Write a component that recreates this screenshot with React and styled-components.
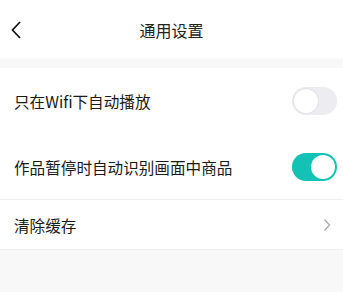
import React, { useState } from 'react';
import styled, { createGlobalStyle } from 'styled-components';

const GlobalStyle = createGlobalStyle`
  html, body {
    margin: 0;
    padding: 0;
    background: #f8f8f8;
    font-family: "Noto Sans CJK SC", "Noto Sans", sans-serif;
  }
`;

const Page = styled.div`
  width: 343px;
  min-height: 292px;
  background: #f8f8f8;
`;

const Header = styled.div`
  height: 58px;
  background: #fff;
  display: flex;
  align-items: center;
  justify-content: center;
  position: relative;
`;

const Back = styled.div`
  position: absolute;
  left: 10px;
  top: 20px;
  width: 14px;
  height: 20px;
  display: flex;
  align-items: center;
`;

const Title = styled.div`
  font-size: 16px;
  color: #222;
  margin-top: 2px;
`;

const Section = styled.div`
  margin-top: 10px;
  background: #fff;
`;

const Row = styled.div`
  height: ${(p) => p.h}px;
  display: flex;
  align-items: center;
  justify-content: space-between;
  padding: 0 6px 0 14px;
  border-bottom: ${(p) => (p.divider ? '1px solid #f0f0f0' : 'none')};
  box-sizing: border-box;
`;

const Label = styled.div`
  font-size: 15.6px;
  color: #1a1a1a;
`;

const Toggle = styled.div`
  width: 45px;
  height: 28px;
  border-radius: 14px;
  background: ${(p) => (p.on ? '#13c2b5' : '#ececf1')};
  position: relative;
  cursor: pointer;
  &::after {
    content: '';
    position: absolute;
    top: 2px;
    left: ${(p) => (p.on ? '19px' : '2px')};
    width: 24px;
    height: 24px;
    border-radius: 50%;
    background: #fff;
    box-shadow: ${(p) => (p.on ? 'none' : '0 0 0 1px #e2e2e6')};
  }
`;

const Chevron = styled.div`
  width: 16px;
  display: flex;
  justify-content: center;
  margin-right: 2px;
`;

export default () => {
  const [wifi, setWifi] = useState(false);
  const [detect, setDetect] = useState(true);

  return (
    <Page>
      <GlobalStyle />
      <Header>
        <Back>
          <svg width="12" height="18" viewBox="0 0 12 18">
            <path d="M10 1 L2.5 9 L10 17" fill="none" stroke="#111" strokeWidth="1.7" />
          </svg>
        </Back>
        <Title>通用设置</Title>
      </Header>
      <Section>
        <Row h={66}>
          <Label>只在Wifi下自动播放</Label>
          <Toggle on={wifi ? 1 : 0} onClick={() => setWifi(!wifi)} />
        </Row>
        <Row h={66} divider>
          <Label>作品暂停时自动识别画面中商品</Label>
          <Toggle on={detect ? 1 : 0} onClick={() => setDetect(!detect)} />
        </Row>
        <Row h={50} divider>
          <Label>清除缓存</Label>
          <Chevron>
            <svg width="8" height="14" viewBox="0 0 8 14">
              <path d="M1.5 1.5 L6.5 7 L1.5 12.5" fill="none" stroke="#aaa" strokeWidth="1.3" />
            </svg>
          </Chevron>
        </Row>
      </Section>
    </Page>
  );
};
